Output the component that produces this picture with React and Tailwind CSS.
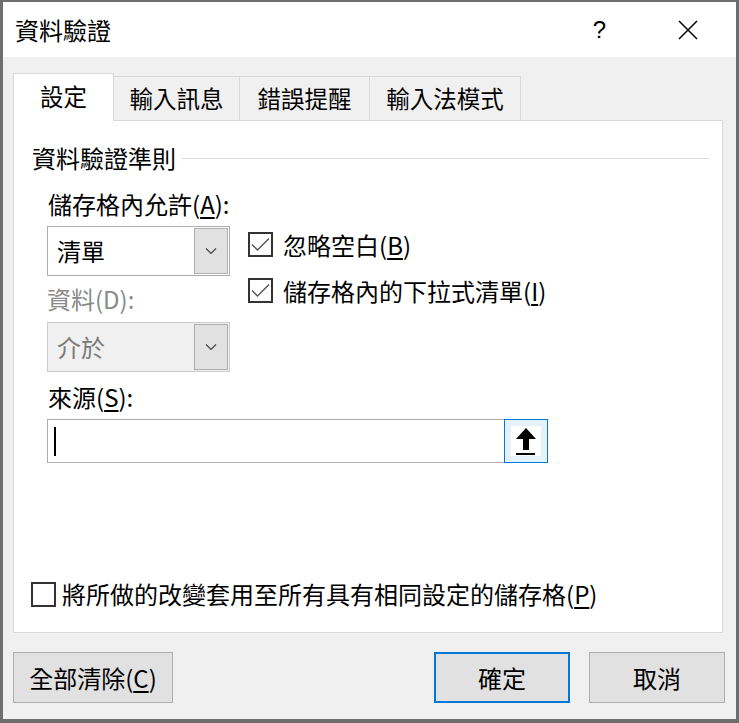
import React from 'react';

const font = { fontFamily: '"Noto Sans CJK TC", "Noto Sans", sans-serif' };

function Chevron() {
	return (
		<svg width="12" height="8" viewBox="0 0 12 8">
			<polyline points="1,1.5 6,6.5 11,1.5" fill="none" stroke="#444" strokeWidth="1.2" />
		</svg>
	);
}

function Dropdown({ value, disabled }) {
	return (
		<div className={`flex w-[183px] h-[50px] border ${disabled ? 'border-[#cccccc] bg-[#f0f0f0]' : 'border-[#adadad] bg-white'} p-[1px]`}>
			<div className={`flex-1 flex items-center pl-[8px] ${disabled ? 'text-[#7a7a7a]' : 'text-black'}`}>{value}</div>
			<div className="w-[34px] h-full flex items-center justify-center bg-[#e1e1e1] border border-[#adadad]">
				<Chevron />
			</div>
		</div>
	);
}

function CheckBox({ checked }) {
	return (
		<div className="w-[25px] h-[25px] border-2 border-[#333333] bg-white flex items-center justify-center shrink-0">
			{checked && (
				<svg width="21" height="21" viewBox="0 0 21 21">
					<polyline points="2,10.5 7.5,16 19,4.5" fill="none" stroke="#555" strokeWidth="1.4" />
				</svg>
			)}
		</div>
	);
}

// mnemonic letter, underlined
function Key({ k }) {
	return <>(<span className="underline underline-offset-[3px]">{k}</span>)</>;
}

function Button({ children, primary, w }) {
	return (
		<button className={`h-[51px] ${w} bg-[#e1e1e1] text-[24px] text-black flex items-center justify-center ${primary ? 'border-2 border-[#0078d7]' : 'border border-[#adadad]'}`}>
			{children}
		</button>
	);
}

export default function App() {
	return (
		<div style={font} className="w-[739px] h-[723px] bg-[#6e6e6e] pt-[2px] pl-[3px] pr-[3px] pb-[4px] flex flex-col overflow-hidden">
			{/* title bar */}
			<div className="h-[55px] bg-white flex items-center pl-[12px] shrink-0">
				<span className="text-[24px] leading-[30px] text-black">資料驗證</span>
				<div className="ml-auto flex items-center">
					<span className="text-[24px] leading-[30px] text-black mr-[71px]" style={{ fontFamily: '"Liberation Sans", sans-serif', fontWeight: 300 }}>?</span>
					<svg width="22" height="22" viewBox="0 0 22 22" className="mr-[37px]">
						<path d="M2 2 L20 20 M20 2 L2 20" stroke="#000" strokeWidth="1.5" />
					</svg>
				</div>
			</div>

			{/* body */}
			<div className="flex-1 bg-[#f0f0f0] flex flex-col pl-[10px] pr-[11px]">
				{/* tabs */}
				<div className="flex items-end mt-[16px] h-[48px] text-[23.5px] text-black relative z-10">
					<div className="w-[101px] h-[48px] bg-white border border-b-0 border-[#d9d9d9] flex items-center justify-center pb-[2px]">設定</div>
					<div className="w-[126px] h-[45px] border border-l-0 border-b-0 border-[#d9d9d9] flex items-center justify-center">輸入訊息</div>
					<div className="w-[130px] h-[45px] border border-l-0 border-b-0 border-[#d9d9d9] flex items-center justify-center">錯誤提醒</div>
					<div className="w-[151px] h-[45px] border border-l-0 border-b-0 border-[#d9d9d9] flex items-center justify-center">輸入法模式</div>
				</div>

				{/* panel */}
				<div className="w-[710px] h-[513px] -mt-[1px] bg-white border border-[#d9d9d9] flex flex-col pl-[18px] pr-[13px] text-[24px] text-black">
					<div className="flex items-center mt-[22px] h-[30px]">
						<span className="leading-[30px]">資料驗證準則</span>
						<div className="flex-1 h-px bg-[#dcdcdc] ml-[6px]" />
					</div>

					<div className="pl-[16px] flex flex-col">
						<div className="mt-[16px] leading-[30px]">儲存格內允許<Key k="A" />:</div>
						<div className="flex mt-[7px]">
							<div className="flex flex-col -ml-[1px]">
								<Dropdown value="清單" />
								<div className="mt-[8px] leading-[30px] text-[#8a8a8a]">資料(D):</div>
								<div className="mt-[8px]">
									<Dropdown value="介於" disabled />
								</div>
							</div>
							<div className="flex flex-col ml-[18px] mt-[6px] gap-[21px]">
								<div className="flex items-center gap-[10px] h-[25px]">
									<CheckBox checked />
									<span className="leading-[30px]">忽略空白<Key k="B" /></span>
								</div>
								<div className="flex items-center gap-[10px] h-[25px]">
									<CheckBox checked />
									<span className="leading-[30px]">儲存格內的下拉式清單<Key k="I" /></span>
								</div>
							</div>
						</div>
						<div className="mt-[10px] leading-[30px]">來源<Key k="S" />:</div>
						<div className="mt-[7px] -ml-[1px] w-[501px] h-[44px] border border-[#adadad] flex">
							<div className="flex-1 flex items-center pl-[6px]">
								<div className="w-[2px] h-[29px] bg-black" />
							</div>
							<div className="w-[44px] h-[44px] -mt-[1px] -mr-[1px] border border-[#0078d7] bg-[#e5f1fb] flex items-center justify-center">
								<svg width="30" height="30" viewBox="0 0 30 30">
									<rect width="30" height="30" fill="#fff" />
									<path d="M15 2 L25 13 L18 13 L18 24 L12 24 L12 13 L5 13 Z" fill="#000" />
									<rect x="5" y="27" width="19" height="2" fill="#000" />
								</svg>
							</div>
						</div>
					</div>

					<div className="mt-auto mb-[23px] flex items-center h-[30px] -ml-[1px]">
						<CheckBox />
						<span className="ml-[6px] leading-[30px]">將所做的改變套用至所有具有相同設定的儲存格<Key k="P" /></span>
					</div>
				</div>

				{/* buttons */}
				<div className="flex mt-[19px]">
					<Button w="w-[160px]">全部清除<Key k="C" /></Button>
					<div className="ml-auto flex gap-[19px]">
						<Button w="w-[136px]" primary>確定</Button>
						<Button w="w-[136px]">取消</Button>
					</div>
				</div>
			</div>
		</div>
	);
}
